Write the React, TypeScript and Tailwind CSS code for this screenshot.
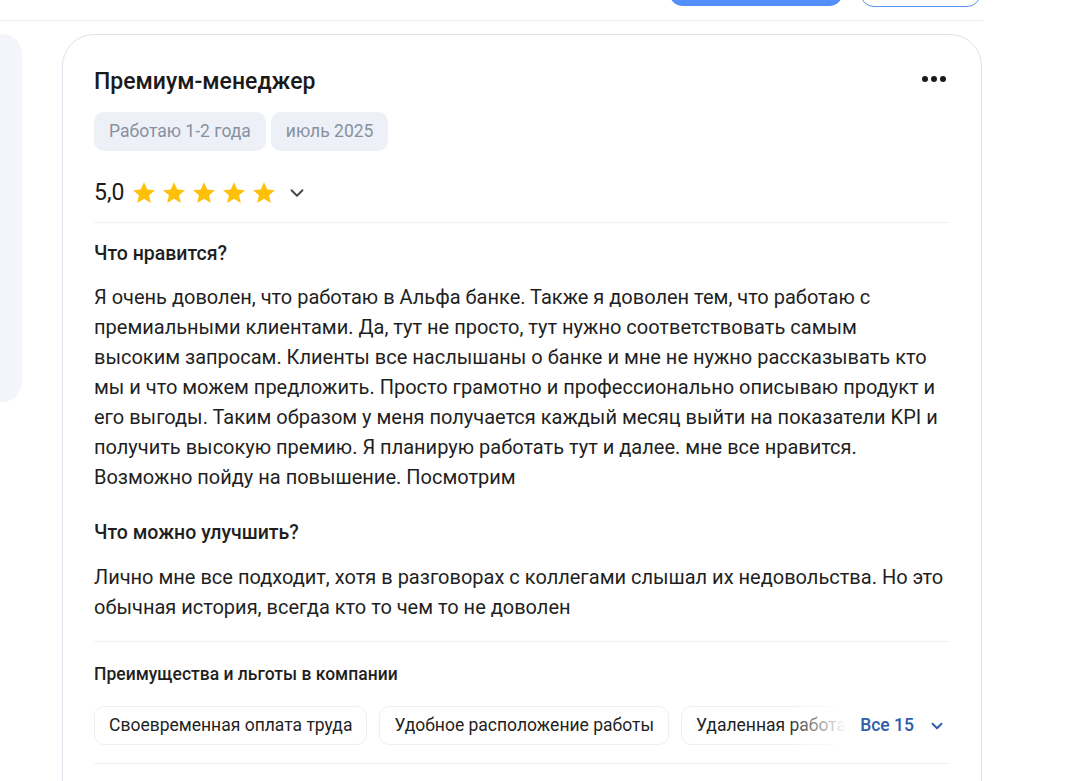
import { ChevronDown } from "lucide-react";

const Star = () => (
  <svg width="22" height="22" viewBox="2 2 20 20" className="shrink-0">
    <path d="M12 2.2l2.9 6.6 7.1.6-5.4 4.7 1.6 7-6.2-3.8-6.2 3.8 1.6-7L2 9.4l7.1-.6z" fill="#ffc107" />
  </svg>
);

const perks = ["Своевременная оплата труда", "Удобное расположение работы", "Удаленная работа"];

export default function App() {
  return (
    <div className="relative h-[781px] w-[1074px] overflow-hidden bg-white text-[#1f1f1f]" style={{ fontFamily: "Roboto, 'Noto Sans', sans-serif" }}>
      {/* top bar remains */}
      <div className="flex h-[21px] w-[983px] items-start justify-end gap-[17px] border-b border-[#e9eef5] pr-[2px]">
        <div className="-mt-[20px] h-[26px] w-[174px] rounded-b-[14px] bg-[#528ffa]" />
        <div className="-mt-[20px] h-[27px] w-[121px] rounded-b-[14px] border border-[#5a95f5]" />
      </div>

      <div className="flex items-start gap-[40px] pt-[13px]">
        {/* left side panel */}
        <div className="-ml-[20px] h-[368px] w-[42px] shrink-0 rounded-r-[20px] bg-[#f3f5fa]" />

        {/* review card */}
        <div className="h-[800px] w-[920px] shrink-0 rounded-[32px] border border-[#dde3ec] px-[31px] pt-[32px]">
          <div className="flex items-center justify-between">
            <h2 className="text-[23px] font-medium leading-[30px] text-[#1a1a1a]">Премиум-менеджер</h2>
            <div className="mb-[6px] mr-[4px] flex gap-[3px]">
              <span className="h-[6px] w-[6px] rounded-full bg-[#1a1a1a]" />
              <span className="h-[6px] w-[6px] rounded-full bg-[#1a1a1a]" />
              <span className="h-[6px] w-[6px] rounded-full bg-[#1a1a1a]" />
            </div>
          </div>

          <div className="mt-[15px] flex gap-[5px]">
            <span className="rounded-[10px] bg-[#edf0f6] px-[15px] py-[9px] text-[17.5px] leading-[21px] text-[#8790a0]">Работаю 1-2 года</span>
            <span className="rounded-[10px] bg-[#edf0f6] px-[15px] py-[9px] text-[17.5px] leading-[21px] text-[#8790a0]">июль 2025</span>
          </div>

          <div className="mt-[28px] flex items-center border-b border-[#eef1f6] pb-[15px]">
            <span className="mr-[9px] text-[23px] leading-[28px] text-[#1a1a1a]">5,0</span>
            <div className="flex gap-[8px]">
              <Star /><Star /><Star /><Star /><Star />
            </div>
            <ChevronDown size={22} strokeWidth={2} className="ml-[11px] text-[#444]" />
          </div>

          <h3 className="mt-[19px] text-[19.5px] font-medium leading-[24px]">Что нравится?</h3>
          <p className="mt-[16px] max-w-[851px] text-[20px] leading-[30px] text-[#1f1f1f]">
            Я очень доволен, что работаю в Альфа банке. Также я доволен тем, что работаю с премиальными клиентами. Да, тут не просто, тут нужно соответствовать самым высоким запросам. Клиенты все наслышаны о банке и мне не нужно рассказывать кто мы и что можем предложить. Просто грамотно и профессионально описываю продукт и его выгоды. Таким образом у меня получается каждый месяц выйти на показатели KPI и получить высокую премию. Я планирую работать тут и далее. мне все нравится. Возможно пойду на повышение. Посмотрим
          </p>

          <h3 className="mt-[29px] text-[19.5px] font-medium leading-[24px]">Что можно улучшить?</h3>
          <p className="mt-[17px] max-w-[851px] text-[20px] leading-[30px] text-[#1f1f1f]">
            Лично мне все подходит, хотя в разговорах с коллегами слышал их недовольства. Но это обычная история, всегда кто то чем то не доволен
          </p>

          <div className="mt-[19px] border-t border-[#eef1f6] pt-[21px]">
            <h4 className="text-[17.5px] font-medium leading-[22px]">Преимущества и льготы в компании</h4>
            <div className="mt-[21px] flex items-center">
              <div className="relative flex min-w-0 flex-1 gap-[12px] overflow-hidden">
                {perks.map((p) => (
                  <span key={p} className="shrink-0 whitespace-nowrap rounded-[10px] border border-[#eceff5] px-[14px] py-[8px] text-[17.5px] leading-[21px] text-[#1f1f1f]">
                    {p}
                  </span>
                ))}
                <div className="absolute right-0 top-0 h-full w-[60px] bg-gradient-to-r from-white/0 to-white" />
              </div>
              <button className="ml-[14px] flex shrink-0 items-center gap-[14px] pr-[4px] text-[17.5px] font-medium text-[#2e5da8]">
                Все 15
                <ChevronDown size={18} strokeWidth={2.5} />
              </button>
            </div>
            <div className="mt-[18px] border-b border-[#eef1f6]" />
          </div>
        </div>
      </div>
    </div>
  );
}
